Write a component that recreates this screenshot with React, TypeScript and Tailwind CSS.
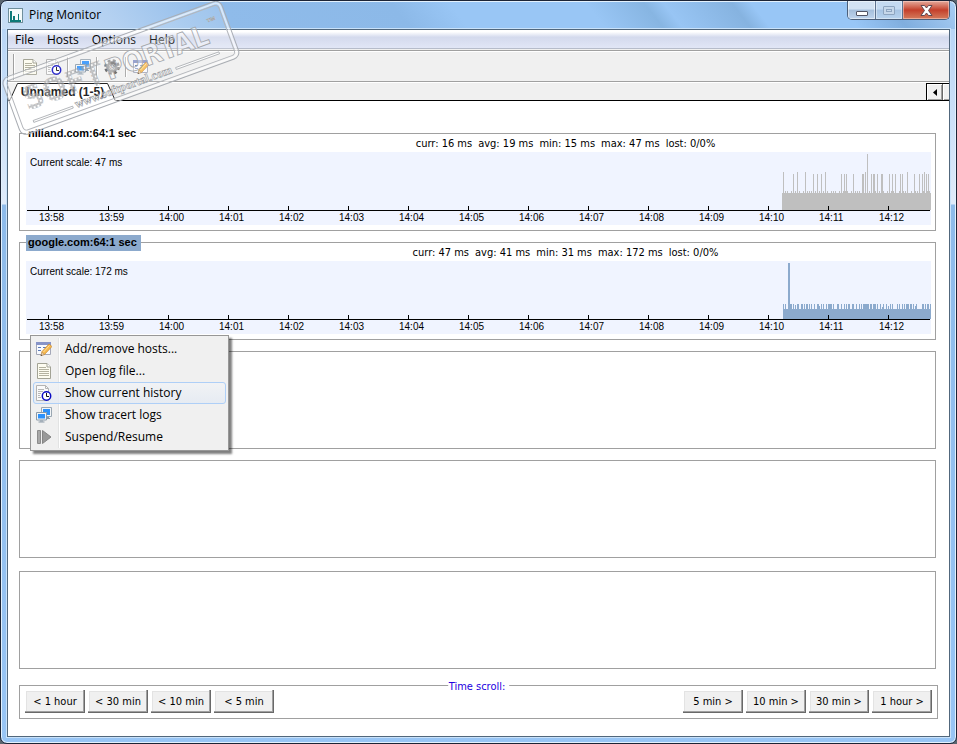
import React from "react";

const ui = "font-['Open_Sans','Noto_Sans',sans-serif]";
const tahoma = "font-['DejaVu_Sans_Condensed','DejaVu_Sans',sans-serif]";
const arial = "font-['Liberation_Sans',Arial,sans-serif]";

const times = [
  "13:58", "13:59", "14:00", "14:01", "14:02", "14:03", "14:04", "14:05",
  "14:06", "14:07", "14:08", "14:09", "14:10", "14:11", "14:12",
];

/* [x, height, width] measured from the axis upwards */
type Bar = [number, number, number];

const spikes: Bar[] = [
  [1, 38, 1], [11, 36, 1], [15, 38, 1], [23, 38, 1], [31, 36, 1], [35, 36, 1],
  [39, 36, 1], [43, 38, 1], [59, 36, 1], [62, 36, 1], [64, 36, 1], [71, 36, 1],
  [80, 36, 2], [83, 38, 1], [85, 56, 1], [89, 36, 1], [91, 36, 2], [95, 36, 1],
  [99, 36, 2], [107, 36, 1], [110, 36, 1], [113, 36, 1], [118, 36, 1],
  [120, 36, 1], [125, 38, 1], [132, 36, 1], [137, 36, 1], [140, 36, 1],
  [142, 38, 1], [144, 36, 1], [146, 36, 1],
];
const nilBars: Bar[] = [
  [0, 17, 149],
  ...Array.from({ length: 37 }, (_, i): Bar => [1 + i * 4, 19, 1]),
  ...Array.from({ length: 26 }, (_, i): Bar => [3 + i * 6, 19, 1]),
  ...spikes,
];

const bumps: [number, number][] = [
  [1, 1], [3, 1], [8, 2], [11, 1], [15, 2], [19, 2], [22, 1], [24, 2], [27, 1],
  [29, 1], [32, 1], [35, 2], [39, 1], [41, 1], [44, 1], [46, 4], [51, 1],
  [55, 2], [59, 1], [62, 1], [64, 1], [66, 2], [70, 2], [74, 1], [77, 1],
  [79, 1], [81, 6], [88, 2], [91, 3], [95, 1], [98, 1], [101, 1], [104, 1],
  [108, 1], [110, 1], [115, 1], [117, 1], [120, 1], [122, 1], [124, 3],
  [128, 2], [131, 1], [134, 1], [140, 2], [143, 1], [145, 2], [148, 1],
];
const googleBars: Bar[] = [
  [1, 10, 148],
  [6, 56, 2],
  [13, 14, 1],
  [37, 13, 1],
  [100, 12, 1],
  [106, 13, 1],
  [133, 13, 1],
  ...bumps.map(([x, w]): Bar => [x, 15, w]),
];

function Chart({ scale, bars, color }: { scale: string; bars: Bar[]; color: string }) {
  return (
    <div className="relative ml-[6px] mr-1 h-[73px] overflow-hidden bg-[#f0f4ff]">
      <svg className="absolute right-0 top-0 h-[58px] w-[149px]" viewBox="0 0 149 58" shapeRendering="crispEdges" aria-hidden="true">
        {bars.map(([x, h, w], i) => (
          <rect key={i} x={x} y={58 - h} width={w} height={h} fill={color} />
        ))}
      </svg>
      <div className="relative flex h-[59px] flex-col justify-between">
        <p className={`${arial} pl-1 pt-1 text-[10px] leading-[14px]`}>{scale}</p>
        <div className="ml-px mr-px flex overflow-hidden border-b border-black pl-[21px]">
          {times.map((t) => (
            <i key={t} className="h-1 w-[60px] shrink-0 border-l border-black" />
          ))}
        </div>
      </div>
      <div className={`${arial} flex pl-[13px] text-[10px] leading-[14px]`}>
        {times.map((t) => (
          <span key={t} className="w-[60px] shrink-0">{t}</span>
        ))}
      </div>
    </div>
  );
}

function Host(props: {
  name: string; selected?: boolean; stats: string[]; scale: string; bars: Bar[]; color: string;
}) {
  return (
    <fieldset className="relative h-[98px] min-w-0 border border-[#a0a0a0]">
      <legend
        className={`${arial} absolute -top-2 left-[6px] h-4 pl-[2px] pr-1 text-[11px] font-bold leading-[15px] ${
          props.selected ? "bg-[#8caacd]" : "bg-white"
        }`}
      >
        {props.name}
      </legend>
      <p className={`${tahoma} flex h-[18px] justify-center gap-[6px] pl-[176px] text-[11px] leading-[20px]`}>
        {props.stats.map((s) => (
          <span key={s} className="whitespace-nowrap">{s}</span>
        ))}
      </p>
      <Chart scale={props.scale} bars={props.bars} color={props.color} />
    </fieldset>
  );
}

function PageIcon() {
  return (
    <svg width="16" height="16" viewBox="0 0 16 16" aria-hidden="true">
      <path d="M1.500 .5h9.500l3.500 3.500v11.500h-13z" fill="#fdfcf0" stroke="#a3a395" />
      <path d="M11 .5v3.500h3.500" fill="#fff" stroke="#a3a395" />
      <path d="M3 4.500h7M3 6.500h10M3 8.500h10M3 10.500h10M3 12.500h10" stroke="#b4b2a0" />
    </svg>
  );
}

function HistoryIcon() {
  return (
    <svg width="16" height="16" viewBox="0 0 16 16" aria-hidden="true">
      <path d="M.5 .5h9l3 3v12h-12z" fill="#fafafa" stroke="#b4b4b4" />
      <path d="M9.500 .5v3h3" fill="none" stroke="#b4b4b4" />
      <path d="M2 4.500h6M2 6.500h5M2 8.500h3M2 10.500h2M2 12.500h3" stroke="#b8b8b8" />
      <circle cx="10.500" cy="11" r="4.200" fill="#fff" stroke="#0b0bc4" strokeWidth="1.500" />
      <path d="M10.500 8v3.500h2.500" fill="none" stroke="#111" />
    </svg>
  );
}

function ScreensIcon() {
  return (
    <svg width="16" height="16" viewBox="0 0 16 16" aria-hidden="true">
      <path d="M5.500 .5h10v9h-10z" fill="#f2f5f7" stroke="#9aa7b2" />
      <path d="M7 2h7v6h-7z" fill="#2d91fa" />
      <path d="M9 11.500h5M11 10.500h2" stroke="#8798a6" />
      <path d="M.5 5.500h10v7.500h-10z" fill="#f2f5f7" stroke="#8b9aa8" />
      <path d="M2 7h7v4.500h-7z" fill="#2d91fa" />
      <path d="M2.500 15h6M4 14h3" stroke="#8b9aa8" />
    </svg>
  );
}

function EditIcon() {
  return (
    <svg width="16" height="16" viewBox="0 0 16 16" aria-hidden="true">
      <path d="M.5 1.500h14v12h-14z" fill="#f8faff" stroke="#a4a8b8" />
      <path d="M0 1h15v3h-15z" fill="#8794c8" />
      <path d="M2 6.500h3M2 9.500h3M7 6.500h3" stroke="#5a7ab8" />
      <path d="M5 14.500l1-4 7-7.500 3 2.500-7.500 8z" fill="#f6b94e" stroke="#c98a35" strokeWidth=".7" />
      <path d="M7.500 11l6-6.500" stroke="#ffe0a0" />
      <path d="M5 14.500l.8-3.200 2.400 2.200z" fill="#f3dcc0" stroke="#a08058" strokeWidth=".5" />
      <path d="M4.700 15l.4-1.400 1 .9z" fill="#333" />
    </svg>
  );
}

function PlayIcon() {
  return (
    <svg width="16" height="16" viewBox="0 0 16 16" aria-hidden="true">
      <path d="M1.500 1.500h3v13h-3z" fill="#a8a8a8" stroke="#8c8c8c" />
      <path d="M6.500 1.500l8.500 6.500-8.500 6.500z" fill="#999" stroke="#858585" />
    </svg>
  );
}

function GearIcon() {
  return (
    <svg width="16" height="16" viewBox="0 0 16 16" aria-hidden="true">
      <circle cx="8" cy="8" r="6.500" fill="none" stroke="#5a5a5a" strokeWidth="2.600" strokeDasharray="2.800 2.300" />
      <circle cx="8" cy="8" r="4.200" fill="#ececec" stroke="#777" strokeWidth="2.600" />
      <circle cx="8" cy="8" r="2.300" fill="#f4f4f4" stroke="#555" strokeWidth=".8" />
    </svg>
  );
}

function Watermark() {
  const wide = { fontFamily: "DejaVu Sans Condensed, DejaVu Sans, sans-serif", fontWeight: 700 };
  return (
    <svg className="pointer-events-none absolute left-0 top-0 z-20" width="250" height="145" viewBox="0 0 250 145" aria-hidden="true">
      <defs>
        <pattern id="cells" width="4" height="4" patternUnits="userSpaceOnUse">
          <path d="M.5 .5h3v3h-3z" fill="#fff" fillOpacity=".4" stroke="#94979b" strokeWidth=".6" />
        </pattern>
      </defs>
      <g transform="translate(0 78) rotate(-20)">
        <rect x="0" y="0" width="233" height="61" rx="7" fill="#fff" fillOpacity=".14" stroke="#a9adb3" strokeWidth="1" />
        <rect x="2" y="2" width="229" height="57" rx="5" fill="none" stroke="#fff" strokeOpacity=".6" strokeWidth="2" />
        <rect x="4" y="4" width="225" height="53" rx="4" fill="none" stroke="#b3b6bb" strokeWidth="1" />
        <text x="14" y="39" {...wide} fontSize="32" fill="url(#cells)">SOFT</text>
        <text x="101" y="38" {...wide} fontSize="28" fill="#fff" fillOpacity=".35" stroke="#a2a5aa" strokeWidth=".8">PORTAL</text>
        <text x="213" y="21" fontFamily="Liberation Sans, sans-serif" fontWeight="700" fontSize="10" fill="#fff" stroke="#9a9da2" strokeWidth=".5">™</text>
        <text x="61" y="53" fontFamily="Liberation Serif, serif" fontWeight="700" fontSize="12" fill="#fff" fillOpacity=".6" stroke="#999ca1" strokeWidth=".6">www.softportal.com</text>
        <path d="M16 50h42v2h-42zM168 49h46v2h-46z" fill="#fff" stroke="#9fa2a7" strokeWidth=".7" />
      </g>
    </svg>
  );
}

const menuItems = [
  { label: "Add/remove hosts...", icon: <EditIcon /> },
  { label: "Open log file...", icon: <PageIcon /> },
  { label: "Show current history", icon: <HistoryIcon />, active: true },
  { label: "Show tracert logs", icon: <ScreensIcon /> },
  { label: "Suspend/Resume", icon: <PlayIcon /> },
];

function ContextMenu() {
  return (
    <div
      role="menu"
      className="absolute left-[11px] top-[202px] z-10 w-[199px] border border-[#979797] bg-[#f0f0f0] px-[2px] py-[2px] shadow-[3px_3px_2px_rgba(0,0,0,0.5)]"
    >
      <i className="absolute bottom-[2px] left-[27px] top-[2px] border-l border-r border-l-[#e2e3e3] border-r-white" />
      {menuItems.map((m) => (
        <button
          key={m.label}
          role="menuitem"
          className={`${ui} relative flex h-[22px] w-full items-center gap-[13px] rounded-[3px] border pl-[2px] text-left text-[12px] leading-[20px] ${
            m.active ? "border-[#aecff7] bg-linear-to-b from-[#f1f3f6]/80 to-[#e4eaf3]/80" : "border-transparent"
          }`}
        >
          {m.icon}
          {m.label}
        </button>
      ))}
    </div>
  );
}

function ScrollButton({ children }: { children: string }) {
  return (
    <button
      className={`${tahoma} h-[23px] w-[60px] whitespace-nowrap bg-[#f0f0f0] text-[11px] leading-[21px] shadow-[inset_-1px_-1px_#696969,inset_-2px_-2px_#a0a0a0,inset_1px_1px_#fff,inset_2px_2px_#e3e3e3]`}
    >
      {children}
    </button>
  );
}

function CaptionButtons() {
  return (
    <div className="flex h-[19px] overflow-hidden rounded-b-[5px] border border-t-0 border-[#4b5f7a]">
      <button aria-label="Minimize" className="flex w-7 items-center justify-center border-r border-[#5d728f] bg-linear-to-b from-[#d3e2f3] from-45% via-[#a5bedb] via-50% to-[#bfd5ee] shadow-[inset_0_0_0_1px_rgba(255,255,255,0.5)]">
        <span className="mt-[6px] h-[5px] w-3 rounded-[1px] border border-[#535666] bg-white" />
      </button>
      <button aria-label="Maximize" className="flex w-[27px] items-center justify-center border-r border-[#5d728f] bg-linear-to-b from-[#c5daf1] from-45% via-[#a7c4e4] via-50% to-[#b8d3ee] shadow-[inset_0_0_0_1px_rgba(255,255,255,0.4)]">
        <span className="flex h-[9px] w-3 items-center justify-center rounded-[1px] border border-[#8ea5c0] bg-[#c6d7ea]">
          <span className="h-[3px] w-[6px] border border-[#8ea5c0]" />
        </span>
      </button>
      <button aria-label="Close" className="flex w-[46px] items-center justify-center bg-linear-to-b from-[#e3a99c] from-0% via-[#c43f2b] via-50% to-[#d37a5c] shadow-[inset_0_0_0_1px_rgba(255,220,210,0.5)]">
        <svg width="13" height="11" viewBox="0 0 13 11" aria-hidden="true">
          <path d="M1 .5h3.500l2 2.500 2-2.500h3.500l-3.500 5 3.500 5h-3.500l-2-2.500-2 2.500h-3.500l3.500-5z" fill="#fff" stroke="#54404a" strokeWidth=".9" />
        </svg>
      </button>
    </div>
  );
}

function ToolSeparator() {
  return <i className="ml-[5px] mr-[6px] h-5 border-l border-r border-l-[#a0a0a0] border-r-white" />;
}

export default function App() {
  return (
    <div className="bg-[#5b6670]">
      <div className="relative flex min-h-screen flex-col rounded-[7px] border border-[#1c2436] bg-[#98c3f2] bg-[linear-gradient(180deg,#b2d2f5_0px,#dfebfa_203px,#8ebbea_204px,#98c5f5_100%)] px-[6px] pb-[6px] shadow-[inset_0_0_0_1px_#e3f1fd]">
        <header className="-mx-[5px] mt-px flex h-[27px] items-start justify-between rounded-t-[6px] bg-[linear-gradient(52deg,#c8def5_0%,#b4d1f1_12%,#8fbbea_24%,#8cb9e8_42%,#99c6f5_48%,#99c6f5_62%,#87b5e2_68%,#98c5f4_70%,#86b3e0_77%,#98c6f6_79%,#98c6f6_88%,#80aede_93%,#a8cdf4_100%)] pr-[5px]">
          <h1 className={`${ui} flex items-center gap-[6px] pl-[6px] pt-1 text-[12px] leading-[18px]`}>
            <svg width="15" height="15" viewBox="0 0 15 15" shapeRendering="crispEdges" aria-hidden="true">
              <path d="M0 0h15v15h-15z" fill="#f4fbfb" />
              <path d="M0 0h15v15h-15z" fill="none" stroke="#6f8f9c" strokeWidth="2" />
              <path d="M2 3h2v10h-2zM5 8h2v5h-2zM10 6h1v7h-1zM2 12h11v2h-11z" fill="#0d7a78" />
            </svg>
            Ping Monitor
          </h1>
          <div className="-mt-px">
            <CaptionButtons />
          </div>
        </header>

        <main className="flex flex-1 flex-col border border-[#51677c] bg-white shadow-[0_0_0_1px_#c9e2fa]">
          <nav className={`${ui} flex h-[18px] gap-[13px] bg-linear-to-b from-white from-10% via-[#d4daed] via-40% to-[#e1e6f6] pl-[7px] text-[12px] leading-[20px]`}>
            <button>File</button>
            <button>Hosts</button>
            <button>Options</button>
            <button>Help</button>
          </nav>
          <div className="h-1 border-b border-t border-b-white border-t-[#b6bcca] bg-[#f0f0f0] shadow-[inset_0_-1px_#a0a0a0]" />

          <div role="toolbar" className="flex h-[31px] items-center border-b border-white bg-[#f0f0f0] pl-[5px] shadow-[inset_0_-1px_#a0a0a0]">
            <i className="mr-[7px] h-[26px] border-l border-r border-l-[#a0a0a0] border-r-white" />
            <button aria-label="Open log file" className="mr-2"><PageIcon /></button>
            <button aria-label="Show current history"><HistoryIcon /></button>
            <ToolSeparator />
            <button aria-label="Show tracert logs"><ScreensIcon /></button>
            <ToolSeparator />
            <button aria-label="Settings"><GearIcon /></button>
            <ToolSeparator />
            <button aria-label="Add or remove hosts"><EditIcon /></button>
          </div>

          <div className="relative flex h-[18px] justify-between border-b border-black bg-[#f0f0f0]">
            <button className={`${arial} relative -mb-px ml-px h-[18px] w-[107px] text-[12px] font-bold leading-[18px]`}>
              <svg className="absolute left-0 top-0" width="107" height="18" viewBox="0 0 107 18" aria-hidden="true">
                <path d="M0 18l8-17.500h91l8 17.500z" fill="#fff" />
                <path d="M.5 18l8-17.500h90l8 17.500" fill="none" stroke="#000" />
              </svg>
              <span className="relative">Unnamed (1-5)</span>
            </button>
            <div className="flex w-[23px] overflow-hidden border-l border-t border-black">
              <button aria-label="Scroll tabs left" className="flex w-[15px] shrink-0 items-center justify-center bg-[#f0f0f0] shadow-[inset_1px_1px_#fff,inset_-1px_-1px_#a0a0a0]">
                <svg width="4" height="7" viewBox="0 0 4 7" aria-hidden="true"><path d="M4 0v7l-4-3.500z" /></svg>
              </button>
              <button aria-label="Scroll tabs right" className="w-[15px] shrink-0 border-l border-[#696969] bg-[#f0f0f0] shadow-[inset_1px_1px_#fff,inset_-1px_-1px_#a0a0a0]" />
            </div>
          </div>

          <div className="flex flex-col pb-[17px] pl-[11px] pr-[11px] pt-8">
            <div className="relative mr-[2px] flex flex-col gap-[11px]">
              <Host
                name="niliand.com:64:1 sec"
                stats={["curr: 16 ms", "avg: 19 ms", "min: 15 ms", "max: 47 ms", "lost: 0/0%"]}
                scale="Current scale: 47 ms"
                bars={nilBars}
                color="#bfbfbf"
              />
              <Host
                name="google.com:64:1 sec"
                selected
                stats={["curr: 47 ms", "avg: 41 ms", "min: 31 ms", "max: 172 ms", "lost: 0/0%"]}
                scale="Current scale: 172 ms"
                bars={googleBars}
                color="#8caacd"
              />
              <div className="h-[98px] border border-[#a0a0a0]" />
              <div className="h-[98px] border border-[#a0a0a0]" />
              <div className="mt-[2px] h-[98px] border border-[#a0a0a0]" />
              <ContextMenu />
            </div>

            <fieldset className="relative mt-4 flex min-w-0 justify-between border border-[#a0a0a0] pb-[5px] pl-[5px] pr-[5px] pt-1">
              <legend className={`${tahoma} absolute -top-2 left-1/2 h-4 -translate-x-1/2 bg-white pl-px pr-1 text-[11px] leading-[18px] text-[#2200e0]`}>
                Time scroll:
              </legend>
              <div className="flex gap-[3px]">
                <ScrollButton>{"< 1 hour"}</ScrollButton>
                <ScrollButton>{"< 30 min"}</ScrollButton>
                <ScrollButton>{"< 10 min"}</ScrollButton>
                <ScrollButton>{"< 5 min"}</ScrollButton>
              </div>
              <div className="flex gap-[3px]">
                <ScrollButton>{"5 min >"}</ScrollButton>
                <ScrollButton>{"10 min >"}</ScrollButton>
                <ScrollButton>{"30 min >"}</ScrollButton>
                <ScrollButton>{"1 hour >"}</ScrollButton>
              </div>
            </fieldset>
          </div>
        </main>
        <Watermark />
      </div>
    </div>
  );
}
